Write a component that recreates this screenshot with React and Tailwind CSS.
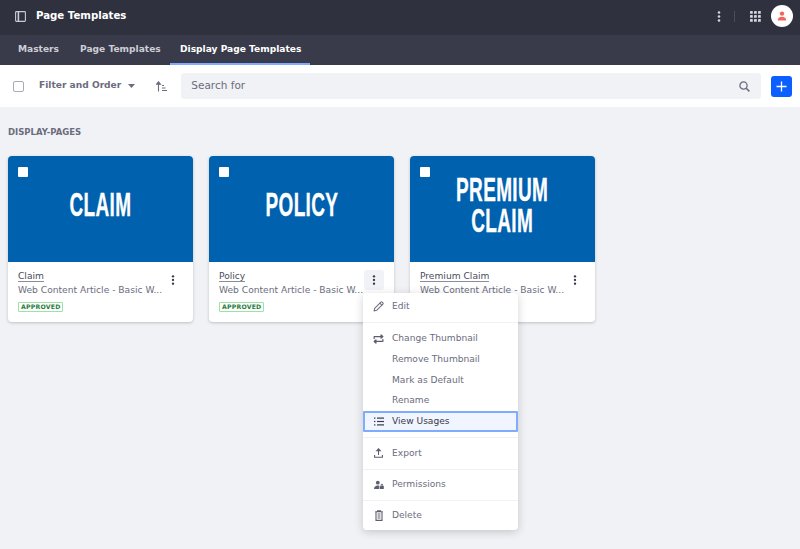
import React from "react";

const font = { fontFamily: '"DejaVu Sans", sans-serif' };

function Kebab({ className = "" }) {
  return (
    <svg viewBox="0 0 4 12" className={"w-[4px] " + className} fill="currentColor">
      <circle cx="2" cy="1.6" r="1.4" />
      <circle cx="2" cy="6" r="1.4" />
      <circle cx="2" cy="10.4" r="1.4" />
    </svg>
  );
}

function Card({ title, thumb, active }) {
  return (
    <div className="w-[185.33px] h-[166px] bg-white rounded-[4px] shadow-[0_1px_3px_rgba(39,40,51,0.25)] flex flex-col overflow-hidden">
      <div className="relative h-[106px] bg-[#0061ae] flex items-center justify-center pb-[6px]">
        <div className="absolute left-[10px] top-[11px] w-[10px] h-[10px] bg-white rounded-[1px]" />
        <div
          className="text-white text-center font-bold text-[26px] leading-[23.8px] scale-x-[0.73] scale-y-[1.28] tracking-[0.5px] whitespace-nowrap [-webkit-text-stroke:0.3px_white]"
          style={{ fontFamily: '"Liberation Sans", sans-serif' }}
        >
          {thumb.map((t) => (
            <div key={t}>{t}</div>
          ))}
        </div>
      </div>
      <div className="flex-1 flex pl-[10px] pt-[8px] pr-[10px]">
        <div className="flex-1 min-w-0">
          <div className="text-[9.15px] leading-[13px] h-[13px] text-[#4b4c5e]">
            <span className="border-b border-[#8b8c9c]">{title}</span>
          </div>
          <div className="pt-[1px] text-[9.15px] leading-[13px] text-[#6b6c7e] whitespace-nowrap">Web Content Article - Basic W...</div>
          <div className="mt-[4.5px] flex">
            <span className="border border-[#9be2a4] text-[#287d3c] font-bold text-[6.2px] leading-[8px] px-[2px] rounded-[1px] tracking-[0.2px]">
              APPROVED
            </span>
          </div>
        </div>
        <div
          className={
            "w-[20px] h-[20px] rounded-[3px] flex items-center justify-center text-[#393a4a] shrink-0 " +
            (active ? "bg-[#f1f2f5]" : "")
          }
        >
          <Kebab className="h-[10px]" />
        </div>
      </div>
    </div>
  );
}

function MenuItem({ icon, children, active }) {
  return (
    <div
      className={
        "h-[20.7px] flex items-center text-[9.1px] " +
        (active
          ? "bg-[#f0f5ff] text-[#393a4a] outline outline-2 outline-[#80acff] -outline-offset-2 rounded-[1px]"
          : "text-[#6b6c7e]")
      }
    >
      <div className="w-[29px] flex justify-center pl-[2px] shrink-0">{icon}</div>
      <span>{children}</span>
    </div>
  );
}

const stroke = { fill: "none", stroke: "currentColor", strokeWidth: 1.1, strokeLinecap: "round", strokeLinejoin: "round" };

const Icons = {
  edit: (
    <svg width="11" height="11" viewBox="0 0 12 12" {...stroke} className="text-[#6b6c7e]">
      <path d="M1.2 10.8l.6-2.8L8.6 1.2a1 1 0 0 1 1.4 0l.8.8a1 1 0 0 1 0 1.4L4 10.2z" />
      <path d="M7.6 2.4l2 2" />
    </svg>
  ),
  swap: (
    <svg width="11" height="10" viewBox="0 0 12 11" {...stroke} strokeWidth="1.3" className="text-[#5d5e70]">
      <path d="M1.2 5V2.8h9" />
      <path d="M8.8 1l2 1.8-2 1.8z" fill="currentColor" />
      <path d="M10.8 6v2.2h-9" />
      <path d="M3.2 6.4l-2 1.8 2 1.8z" fill="currentColor" />
    </svg>
  ),
  list: (
    <svg width="10" height="9" viewBox="0 0 10 9" fill="currentColor" className="text-[#393a4a]">
      <rect x="0" y="0.5" width="1.4" height="1.2" />
      <rect x="3" y="0.5" width="7" height="1.2" />
      <rect x="0" y="3.9" width="1.4" height="1.2" />
      <rect x="3" y="3.9" width="7" height="1.2" />
      <rect x="0" y="7.3" width="1.4" height="1.2" />
      <rect x="3" y="7.3" width="7" height="1.2" />
    </svg>
  ),
  export: (
    <svg width="9" height="10" viewBox="0 0 9 10" fill="none" stroke="currentColor" strokeWidth="1.1" className="text-[#5d5e70]">
      <path d="M4.5 7V1.2" />
      <path d="M2.7 2.8L4.5 .8l1.8 2z" fill="currentColor" />
      <path d="M0.6 7v2.3h7.8V7" />
    </svg>
  ),
  perm: (
    <svg width="10" height="10" viewBox="0 0 11 10" fill="currentColor" className="text-[#5d5e70]">
      <circle cx="4.2" cy="2.4" r="2.1" />
      <path d="M0 9.5c0-2.6 1.7-4 4.2-4 .7 0 1.2.1 1.7.3v3.7z" />
      <rect x="6.6" y="5.8" width="4.2" height="3.7" rx="0.5" />
      <path d="M7.4 6V5a1.3 1.3 0 0 1 2.6 0v1h-.7V5a.6.6 0 0 0-1.2 0v1z" />
    </svg>
  ),
  trash: (
    <svg width="8" height="11" viewBox="0 0 8 11" fill="none" stroke="currentColor" strokeWidth="1.1" className="text-[#5d5e70]">
      <path d="M0.3 1.8h7.4M2.6 1.8V.7h2.8v1.1" />
      <path d="M1 1.8v8.6h6V1.8" />
      <path d="M2.6 4h2.8M2.6 6h2.8M2.6 8h2.8" />
    </svg>
  ),
};

function Divider() {
  return <div className="h-px bg-[#f1f2f5]" />;
}

function Menu() {
  return (
    <div className="absolute left-[363px] top-[293px] w-[155px] h-[237px] bg-white rounded-[4px] shadow-[0_2px_8px_rgba(39,40,51,0.22)] z-10 flex flex-col">
      <div className="pt-[3.5px] pb-[5px]">
        <MenuItem icon={Icons.edit}>Edit</MenuItem>
      </div>
      <Divider />
      <div className="pt-[5.5px] pb-[5px]">
        <MenuItem icon={Icons.swap}>Change Thumbnail</MenuItem>
        <MenuItem>Remove Thumbnail</MenuItem>
        <MenuItem>Mark as Default</MenuItem>
        <MenuItem>Rename</MenuItem>
        <MenuItem icon={Icons.list} active>View Usages</MenuItem>
      </div>
      <Divider />
      <div className="pt-[5px] pb-[5px]">
        <MenuItem icon={Icons.export}>Export</MenuItem>
      </div>
      <Divider />
      <div className="pt-[4.5px] pb-[5px]">
        <MenuItem icon={Icons.perm}>Permissions</MenuItem>
      </div>
      <Divider />
      <div className="pt-[4.5px]">
        <MenuItem icon={Icons.trash}>Delete</MenuItem>
      </div>
    </div>
  );
}

export default function App() {
  return (
    <div className="relative w-[800px] h-[549px] overflow-hidden bg-[#f1f2f5] flex flex-col" style={font}>
      <header className="h-[35px] bg-[#30313f] flex items-center shrink-0 pl-[15px] pr-[7px] pb-[3px]">
        <svg width="11" height="11" viewBox="0 0 11 11" fill="none" stroke="#c9cad2" strokeWidth="1.1">
          <rect x="0.6" y="0.6" width="9.8" height="9.8" rx="0.8" />
          <path d="M3.4 0.6v9.8" strokeWidth="1.6" />
        </svg>
        <div className="ml-[10px] text-white font-bold text-[10.2px]">Page Templates</div>
        <div className="ml-auto flex items-center">
          <Kebab className="h-[11px] text-[#d5d6dc]" />
          <div className="w-px h-[11px] bg-[#4c4d5c] ml-[13px]" />
          <svg width="11" height="11" viewBox="0 0 11 11" fill="#d5d6dc" className="ml-[15px]">
            {[0, 4, 8].flatMap((x) =>
              [0, 4, 8].map((y) => <rect key={x + "-" + y} x={x} y={y} width="2.8" height="2.8" rx="0.4" />)
            )}
          </svg>
          <div className="ml-[10px] w-[22px] h-[22px] rounded-full bg-white flex items-center justify-center">
            <svg width="10" height="10" viewBox="0 0 10 10" fill="#f5635c">
              <circle cx="5" cy="2.6" r="2.2" />
              <path d="M0.8 9.6c0-2.6 1.6-3.8 4.2-3.8s4.2 1.2 4.2 3.8z" />
            </svg>
          </div>
        </div>
      </header>

      <nav className="h-[30px] bg-[#393a4a] flex items-stretch shrink-0 pl-[8px] text-[9.1px] font-bold">
        <div className="w-[61px] pl-[10px] flex items-center text-[#cdced6] pb-[1px]">Masters</div>
        <div className="w-[101px] pl-[11px] flex items-center text-[#cdced6] pb-[1px]">Page Templates</div>
        <div className="w-[140px] pl-[10px] pt-[1px] flex items-center text-white border-b-2 border-[#80acff]">Display Page Templates</div>
      </nav>

      <div className="h-[42px] bg-white flex items-center shrink-0 pl-[13px] pr-[8px]">
        <div className="w-[11px] h-[11px] border border-[#a7a9bc] rounded-[2px] bg-white" />
        <div className="ml-[15px] font-bold text-[9.1px] text-[#6b6c7e]">Filter and Order</div>
        <svg width="7" height="4" viewBox="0 0 7 4" fill="#6b6c7e" className="ml-[7px]">
          <path d="M0 0h7L3.5 4z" />
        </svg>
        <svg width="11" height="11" viewBox="0 0 11 11" className="ml-[21px] text-[#6b6c7e]" fill="none" stroke="currentColor" strokeWidth="1.1">
          <path d="M2.5 10.5V1" />
          <path d="M0.6 3.2L2.5 .8l1.9 2.4z" fill="currentColor" />
          <path d="M6 4.5h2M6 7h3.5M6 9.5h5" />
        </svg>
        <div className="ml-[14px] flex-1 h-[26px] bg-[#f1f2f5] rounded-[3px] flex items-center pl-[10px] pr-[11px]">
          <span className="text-[10.5px] text-[#6b6c7e]">Search for</span>
          <svg width="11" height="11" viewBox="0 0 11 11" fill="none" stroke="#6b6c7e" strokeWidth="1.3" className="ml-auto">
            <circle cx="4.5" cy="4.5" r="3.6" />
            <path d="M7.2 7.2l3.2 3.2" strokeWidth="1.6" />
          </svg>
        </div>
        <div className="ml-[10px] w-[21px] h-[21px] bg-[#0b5fff] rounded-[3px] flex items-center justify-center">
          <svg width="11" height="11" viewBox="0 0 11 11" stroke="white" strokeWidth="1.3">
            <path d="M5.5 0.5v10M0.5 5.5h10" />
          </svg>
        </div>
      </div>

      <main className="pl-[8px] pt-[20px] flex-1">
        <div className="text-[8.5px] font-bold text-[#6b6c7e] leading-[10px]">DISPLAY-PAGES</div>
        <div className="mt-[19px] flex gap-[15.67px]">
          <Card title="Claim" thumb={["CLAIM"]} />
          <Card title="Policy" thumb={["POLICY"]} active />
          <Card title="Premium Claim" thumb={["PREMIUM", "CLAIM"]} />
        </div>
      </main>
      <Menu />
    </div>
  );
}
